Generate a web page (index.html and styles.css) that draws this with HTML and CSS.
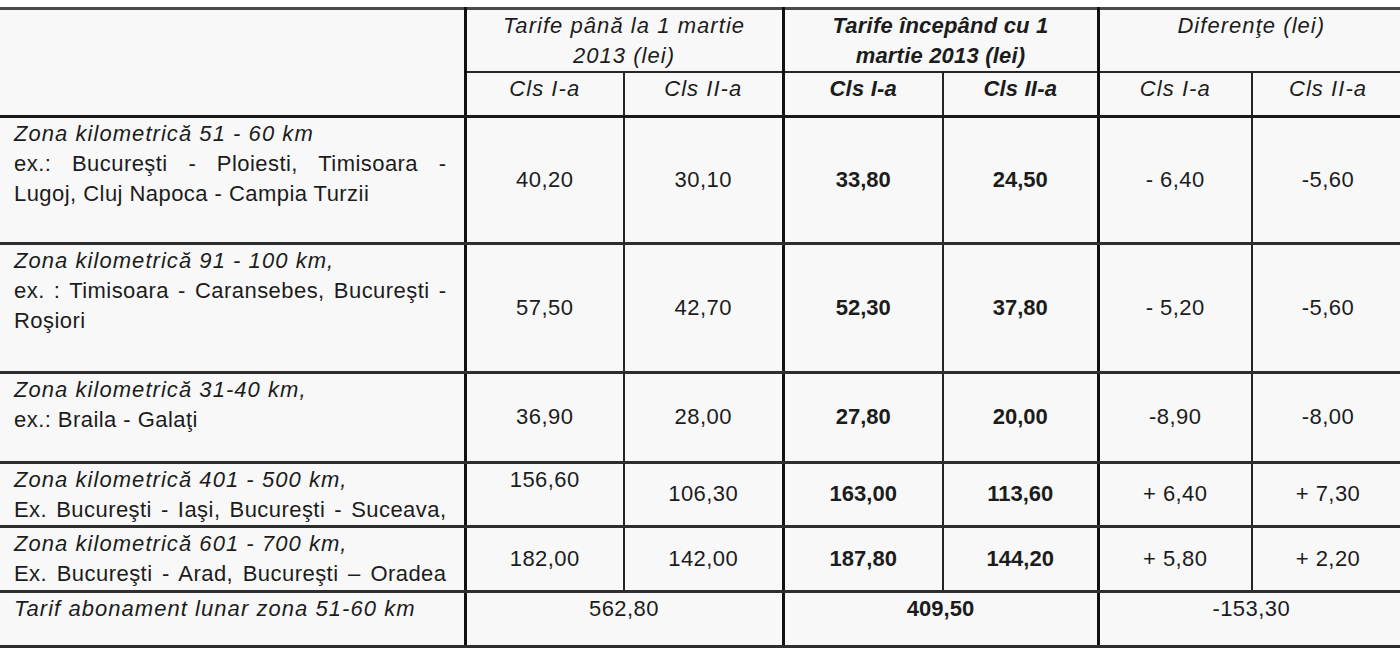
FILE: index.html
```html
<!DOCTYPE html>
<html lang="ro">
<head>
<meta charset="utf-8">
<title>Tarife</title>
<link rel="stylesheet" href="styles.css">
</head>
<body>
<table class="tarife">
  <colgroup>
    <col class="c-zona">
    <col class="c-a">
    <col class="c-b">
    <col class="c-c">
    <col class="c-d">
    <col class="c-e">
    <col class="c-f">
  </colgroup>
  <thead>
    <tr class="h1">
      <th rowspan="2" class="blank"></th>
      <th colspan="2" class="grp it">Tarife până la 1 martie<br>2013 (lei)</th>
      <th colspan="2" class="grp bi">Tarife începând cu 1<br>martie 2013 (lei)</th>
      <th colspan="2" class="grp it">Diferenţe (lei)</th>
    </tr>
    <tr class="h2">
      <th class="grp it">Cls I-a</th>
      <th class="it">Cls II-a</th>
      <th class="grp bi">Cls I-a</th>
      <th class="bi">Cls II-a</th>
      <th class="grp it">Cls I-a</th>
      <th class="it">Cls II-a</th>
    </tr>
  </thead>
  <tbody>
    <tr class="r1">
      <td class="zona"><div class="it">Zona kilometrică 51 - 60 km</div><div class="full">ex.: Bucureşti - Ploiesti, Timisoara -</div><div>Lugoj, Cluj Napoca - Campia Turzii</div></td>
      <td class="num grp">40,20</td>
      <td class="num">30,10</td>
      <td class="num grp b">33,80</td>
      <td class="num b">24,50</td>
      <td class="num grp">- 6,40</td>
      <td class="num">-5,60</td>
    </tr>
    <tr class="r2">
      <td class="zona"><div class="it">Zona kilometrică 91 - 100 km,</div><div class="full">ex. : Timisoara - Caransebes, Bucureşti -</div><div>Roşiori</div></td>
      <td class="num grp">57,50</td>
      <td class="num">42,70</td>
      <td class="num grp b">52,30</td>
      <td class="num b">37,80</td>
      <td class="num grp">- 5,20</td>
      <td class="num">-5,60</td>
    </tr>
    <tr class="r3">
      <td class="zona"><div class="it">Zona kilometrică 31-40 km,</div><div>ex.: Braila - Galaţi</div></td>
      <td class="num grp">36,90</td>
      <td class="num">28,00</td>
      <td class="num grp b">27,80</td>
      <td class="num b">20,00</td>
      <td class="num grp">-8,90</td>
      <td class="num">-8,00</td>
    </tr>
    <tr class="r4">
      <td class="zona"><div class="it">Zona kilometrică 401 - 500 km,</div><div class="full">Ex. Bucureşti - Iaşi, Bucureşti - Suceava,</div></td>
      <td class="num grp top">156,60</td>
      <td class="num">106,30</td>
      <td class="num grp b">163,00</td>
      <td class="num b">113,60</td>
      <td class="num grp">+ 6,40</td>
      <td class="num">+ 7,30</td>
    </tr>
    <tr class="r5">
      <td class="zona"><div class="it">Zona kilometrică 601 - 700 km,</div><div class="full">Ex. Bucureşti - Arad, Bucureşti – Oradea</div></td>
      <td class="num grp">182,00</td>
      <td class="num">142,00</td>
      <td class="num grp b">187,80</td>
      <td class="num b">144,20</td>
      <td class="num grp">+ 5,80</td>
      <td class="num">+ 2,20</td>
    </tr>
    <tr class="r6">
      <td class="zona"><div class="it">Tarif abonament lunar zona 51-60 km</div></td>
      <td colspan="2" class="num grp top">562,80</td>
      <td colspan="2" class="num grp top b">409,50</td>
      <td colspan="2" class="num grp top">-153,30</td>
    </tr>
  </tbody>
</table>
</body>
</html>
```

FILE: styles.css
```css
html, body {
  margin: 0;
  padding: 0;
  background: #ffffff;
  overflow: hidden;
}

body {
  padding-top: 7px;
  font-family: "Liberation Sans", Arial, sans-serif;
  font-size: 22px;
  line-height: 30px;
  color: #1c1c1c;
  letter-spacing: 0.45px;
}

.tarife {
  border-collapse: collapse;
  table-layout: fixed;
  width: 1406px;
  margin-left: -3px;
  background: #f8f8f8;
  border-top: 3px solid #4a4a4a;
  border-bottom: 3px solid #5a5a5a;
}

.c-zona { width: 467px; }
.c-a { width: 159px; }
.c-b { width: 159px; }
.c-c { width: 160px; }
.c-d { width: 155px; }
.c-e { width: 154px; }
.c-f { width: 152px; }

.tarife th,
.tarife td {
  border: 2px solid #262626;
  padding: 1px 14px 0 14px;
  vertical-align: top;
  font-weight: normal;
  text-align: center;
}

.tarife tbody td {
  border-bottom: 3px solid #2e2e2e;
}

.tarife th.grp,
.tarife td.grp {
  border-left: 3px solid #111111;
}

.tarife thead tr.h2 th,
.tarife th.blank {
  border-bottom: 3px solid #1a1a1a;
}

.h1 { height: 63px; }
.h2 { height: 44px; }
.r1 { height: 127px; }
.r2 { height: 129px; }
.r3 { height: 90px; }
.r4 { height: 62px; }
.r5 { height: 65px; }
.r6 { height: 55px; }

.tarife .it {
  font-style: italic;
  letter-spacing: 1.05px;
}

.tarife .bi {
  font-style: italic;
  font-weight: bold;
  letter-spacing: 0.2px;
}

.tarife td.b {
  font-weight: bold;
  letter-spacing: 0;
}

.tarife td.zona {
  text-align: left;
  padding-left: 15px;
  padding-right: 17px;
  border-right: 3px solid #111111;
}

.full {
  white-space: nowrap;
  text-align: justify;
  text-align-last: justify;
}

.tarife td.num {
  vertical-align: middle;
  padding-top: 0;
}

.tarife td.num.top {
  vertical-align: top;
  padding-top: 1px;
}
```
